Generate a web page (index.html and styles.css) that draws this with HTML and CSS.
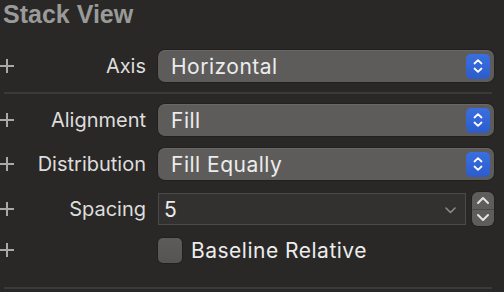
FILE: index.html
```html
<!DOCTYPE html>
<html>
<head>
<meta charset="utf-8">
<link rel="stylesheet" href="styles.css">
</head>
<body>
<div class="panel">
  <div class="title">Stack View</div>

  <div class="row row-axis">
    <span class="plus"></span>
    <span class="label">Axis</span>
    <div class="popup">
      <span class="value">Horizontal</span>
      <span class="popbtn"><svg width="12" height="16" viewBox="0 0 12 16"><path d="M2.5 5.5 L6 2.2 L9.5 5.5 M2.5 10.5 L6 13.8 L9.5 10.5" fill="none" stroke="#fff" stroke-width="1.8" stroke-linecap="round" stroke-linejoin="round"/></svg></span>
    </div>
  </div>

  <div class="sep"></div>

  <div class="row row-align">
    <span class="plus"></span>
    <span class="label">Alignment</span>
    <div class="popup">
      <span class="value">Fill</span>
      <span class="popbtn"><svg width="12" height="16" viewBox="0 0 12 16"><path d="M2.5 5.5 L6 2.2 L9.5 5.5 M2.5 10.5 L6 13.8 L9.5 10.5" fill="none" stroke="#fff" stroke-width="1.8" stroke-linecap="round" stroke-linejoin="round"/></svg></span>
    </div>
  </div>

  <div class="row row-dist">
    <span class="plus"></span>
    <span class="label">Distribution</span>
    <div class="popup">
      <span class="value">Fill Equally</span>
      <span class="popbtn"><svg width="12" height="16" viewBox="0 0 12 16"><path d="M2.5 5.5 L6 2.2 L9.5 5.5 M2.5 10.5 L6 13.8 L9.5 10.5" fill="none" stroke="#fff" stroke-width="1.8" stroke-linecap="round" stroke-linejoin="round"/></svg></span>
    </div>
  </div>

  <div class="row row-spacing">
    <span class="plus"></span>
    <span class="label">Spacing</span>
    <div class="combo">
      <div class="field">
        <span class="fvalue">5</span>
        <svg class="caret" width="11" height="7" viewBox="0 0 11 7"><path d="M1 1 L5.5 5.5 L10 1" fill="none" stroke="#8b8a89" stroke-width="1.6" stroke-linecap="round" stroke-linejoin="round"/></svg>
      </div>
      <div class="stepper">
        <span class="half"><svg width="14" height="9" viewBox="0 0 14 9"><path d="M2 7 L7 2 L12 7" fill="none" stroke="#e4e4e4" stroke-width="2" stroke-linecap="round" stroke-linejoin="round"/></svg></span>
        <span class="divider"></span>
        <span class="half"><svg width="14" height="9" viewBox="0 0 14 9"><path d="M2 2 L7 7 L12 2" fill="none" stroke="#e4e4e4" stroke-width="2" stroke-linecap="round" stroke-linejoin="round"/></svg></span>
      </div>
    </div>
  </div>

  <div class="row row-check">
    <span class="plus"></span>
    <span class="label"></span>
    <div class="checkwrap">
      <span class="checkbox"></span>
      <span class="checklabel">Baseline Relative</span>
    </div>
  </div>

  <div class="sep sep-bottom"></div>
</div>
</body>
</html>
```

FILE: styles.css
```css
html, body {
  margin: 0;
  padding: 0;
  background: #292827;
  width: 504px;
  height: 292px;
  overflow: hidden;
}

.panel {
  display: flex;
  flex-direction: column;
  font-family: Inter, "Noto Sans", "Liberation Sans", sans-serif;
  color: #dcdcdc;
}

.title {
  height: 50px;
  font-family: "Liberation Sans", Inter, sans-serif;
  font-weight: 700;
  font-size: 25px;
  line-height: 28px;
  color: #9a9a99;
  padding-left: 3px;
  box-sizing: border-box;
}

.row {
  display: flex;
  align-items: center;
  height: 32px;
}

.plus {
  width: 14px;
  height: 14px;
  position: relative;
  flex: none;
}
.plus::before,
.plus::after {
  content: "";
  position: absolute;
  background: #a9a9a8;
}
.plus::before {
  left: 0;
  right: 0;
  top: 6px;
  height: 2px;
}
.plus::after {
  top: 0;
  bottom: 0;
  left: 6px;
  width: 2px;
}

.label {
  width: 132px;
  flex: none;
  text-align: right;
  font-size: 20px;
  color: #dedddc;
}

.popup {
  margin-left: 12px;
  width: 336px;
  height: 32px;
  box-sizing: border-box;
  border-radius: 7px;
  background: #5d5c5a;
  box-shadow: inset 0 1px 0 rgba(255,255,255,0.08), 0 0 0 1px rgba(0,0,0,0.18);
  display: flex;
  align-items: center;
  justify-content: space-between;
  padding: 0 4px 0 13px;
}

.value,
.fvalue,
.checklabel {
  font-size: 21px;
  letter-spacing: 0.5px;
  color: #ececec;
}

.popbtn {
  width: 24px;
  height: 25px;
  border-radius: 5px;
  background: linear-gradient(#3a6fe0, #2c5ccc);
  display: flex;
  align-items: center;
  justify-content: center;
}

.sep {
  height: 2px;
  background: #3b3a39;
  margin: 10px 12px 10px 4px;
}

.row-dist {
  margin-top: 12px;
}

.row-spacing {
  margin-top: 12px;
  height: 34px;
}

.combo {
  margin-left: 12px;
  width: 336px;
  display: flex;
  align-items: center;
  gap: 6px;
}

.field {
  width: 308px;
  height: 32px;
  box-sizing: border-box;
  background: #32312f;
  border: 1px solid #4b4a48;
  display: flex;
  align-items: center;
  justify-content: space-between;
  padding: 0 9px 0 5px;
}

.caret {
  margin-top: 2px;
}

.stepper {
  width: 22px;
  height: 34px;
  border-radius: 6px;
  background: #5e5d5b;
  display: flex;
  flex-direction: column;
  align-items: center;
  box-shadow: 0 0 0 1px rgba(0,0,0,0.15);
}

.half {
  flex: 1;
  display: flex;
  align-items: center;
  justify-content: center;
}

.divider {
  width: 100%;
  height: 1px;
  background: #4a4947;
}

.row-check {
  margin-top: 8px;
}

.checkwrap {
  margin-left: 12px;
  display: flex;
  align-items: center;
}

.checkbox {
  width: 24px;
  height: 25px;
  border-radius: 5px;
  background: linear-gradient(#5d5c5a, #555452);
  box-shadow: 0 0 0 1px rgba(0,0,0,0.2);
}

.checklabel {
  margin-left: 9px;
}

.sep-bottom {
  margin-top: 21px;
}
```
